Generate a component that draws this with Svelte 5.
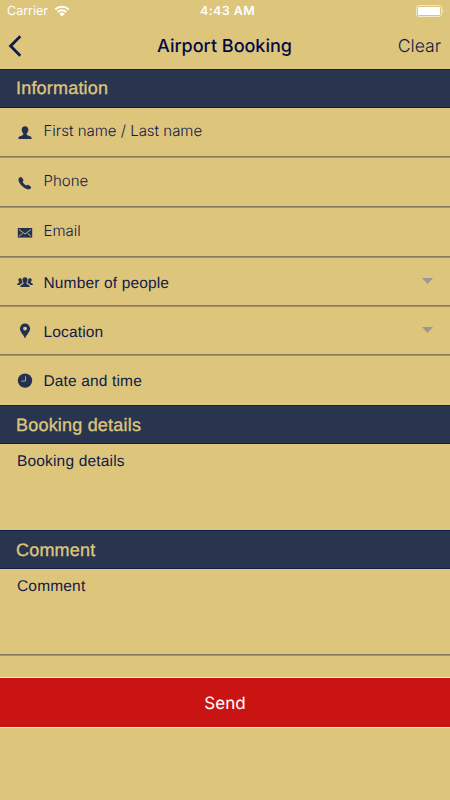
<script lang="ts">
    const fields = [
        { icon: 'person', label: 'First name / Last name', kind: 'text' },
        { icon: 'phone', label: 'Phone', kind: 'text' },
        { icon: 'mail', label: 'Email', kind: 'text' },
        { icon: 'people', label: 'Number of people', kind: 'select' },
        { icon: 'pin', label: 'Location', kind: 'select' },
        { icon: 'clock', label: 'Date and time', kind: 'date' },
    ];
</script>

{#snippet icon(name)}
    <svg class="icon" viewBox="0 0 16 16">
        {#if name === 'person'}
            <path d="M8 1.200c2.100 0 3.300 1.300 3.300 3.300 0 1.700-.6 3.200-1.500 4.100-.2 1 .1 1.600 1.200 2 2.100.7 3.700 1 3.800 3.400H1.200c.1-2.400 1.700-2.700 3.800-3.400 1.100-.4 1.400-1 1.200-2-.9-.9-1.500-2.400-1.500-4.100 0-2 1.200-3.300 3.300-3.300z" />
        {:else if name === 'phone'}
            <path d="M2.200 2.800c1-1.100 2-1.200 2.700-.3l1.400 2.200c.4.8.1 1.300-.7 2.100.8 1.700 2 3 3.700 3.800.8-.8 1.300-1.100 2.100-.6l2.200 1.400c.8.7.7 1.700-.3 2.400-1.300 1-3.100.8-5.400-.5-2.400-1.400-4.300-3.300-5.600-5.700-1.100-2-1.100-3.800-.1-4.800z" />
        {:else if name === 'mail'}
            <path d="M.8 3h14.400v9.600H.8z" />
            <path class="cut" d="M2 4.500l6 4.500 6-4.500M2 11.200l3.500-2.900M14 11.200l-3.500-2.900" />
        {:else if name === 'people'}
            <path d="M8 3.200c1.600 0 2.500 1 2.500 2.500 0 1.300-.4 2.300-1.100 3-.2.800.1 1.200.9 1.500 1.400.5 2.400 1 2.400 2.700H3.300c0-1.700 1-2.200 2.400-2.700.8-.3 1.100-.7.9-1.500-.7-.7-1.100-1.700-1.100-3 0-1.500.9-2.500 2.500-2.500z" />
            <path d="M3 4.200c.8 0 1.400.3 1.700.9-.1 1.500.2 2.700.9 3.600l-.2.5c-1.400.4-2.200.8-2.600 1.700H.1c0-1.200.6-1.600 1.500-1.900.6-.2.8-.6.6-1.200-.5-.5-.9-1.100-.9-1.900 0-1.100.7-1.700 1.700-1.700z" />
            <path d="M13 4.200c-.8 0-1.400.3-1.700.9.1 1.500-.2 2.700-.9 3.600l.2.5c1.400.4 2.200.8 2.600 1.700h2.700c0-1.200-.6-1.600-1.500-1.900-.6-.2-.8-.6-.6-1.200.5-.5.9-1.100.9-1.900 0-1.100-.7-1.700-1.700-1.700z" />
        {:else if name === 'pin'}
            <path fill-rule="evenodd" d="M8 .5a5.100 5.100 0 0 1 5.100 5.100C13.100 9 9.700 11.500 8 15.400 6.300 11.500 2.900 9 2.900 5.600A5.100 5.100 0 0 1 8 .5zm0 3.200a1.900 1.900 0 1 0 0 3.800 1.900 1.900 0 0 0 0-3.800z" />
        {:else}
            <circle cx="8" cy="7.600" r="7.200" />
            <path class="hands" d="M8.500 3.300v4.800H4.300" />
        {/if}
    </svg>
{/snippet}

<div class="screen">
    <div class="status">
        <div class="carrier">
            Carrier
            <svg class="wifi" viewBox="0 0 16 12">
                <path d="M1.200 4.500a9.800 9.800 0 0 1 13.600 0M3.600 7a6.300 6.300 0 0 1 8.800 0" />
                <path class="dot" d="M8 11.400L5.200 8.800a4 4 0 0 1 5.600 0z" />
            </svg>
        </div>
        <div class="clock">4:43 AM</div>
        <svg class="battery" viewBox="0 0 28 12">
            <rect class="case" x=".5" y=".5" width="25" height="11" rx="2.500" />
            <rect x="2" y="2" width="22" height="8" rx="1.200" />
            <path class="tip" d="M26.500 4c1.300.6 1.300 3.400 0 4z" />
        </svg>
    </div>

    <header>
        <button class="back" aria-label="Back">
            <svg viewBox="0 0 14 22"><path d="M12.300 1.300L2.600 11l9.700 9.700" /></svg>
        </button>
        <h1>Airport Booking</h1>
        <button class="clear">Clear</button>
    </header>

    <h2>Information</h2>
    {#each fields as field}
        <div class="field {field.kind}">
            {@render icon(field.icon)}
            <span class="label">{field.label}</span>
            {#if field.kind === 'select'}
                <svg class="arrow" viewBox="0 0 11 6"><path d="M0 0h11L5.500 6z" /></svg>
            {/if}
        </div>
    {/each}

    <h2 class="lower">Booking details</h2>
    <div class="area details">Booking details</div>
    <h2 class="lower">Comment</h2>
    <div class="area comment">Comment</div>

    <button class="send">Send</button>
</div>

<style>
    :global(body) {
        margin: 0;
        background: #dec57c;
    }

    .screen {
        height: 800px;
        overflow: hidden;
        background: #dec57c;
        color: #101b49;
        font-family: Inter, sans-serif;
        text-rendering: geometricPrecision;
    }

    button {
        padding: 0;
        border: 0;
        background: none;
        color: inherit;
        font-family: inherit;
        text-rendering: inherit;
    }

    .status {
        display: grid;
        grid-template-columns: 1fr auto 1fr;
        align-items: center;
        height: 23px;
        padding: 0 6px 0 7px;
        color: #fff;
        font-size: 12.5px;
        line-height: 17px;
    }

    .carrier {
        display: flex;
        align-items: center;
        gap: 6px;
    }

    .wifi {
        width: 16px;
        height: 12px;
        margin-bottom: 1px;
        fill: none;
        stroke: #fff;
        stroke-width: 1.9;
    }

    .wifi .dot {
        fill: #fff;
        stroke: none;
    }

    .clock {
        padding-left: 4px;
        font-weight: 600;
        letter-spacing: 0.4px;
    }

    .battery {
        justify-self: end;
        width: 28px;
        height: 12px;
        margin-bottom: 1px;
        fill: #fff;
    }

    .battery .case {
        fill: none;
        stroke: #fff;
        stroke-opacity: 0.6;
    }

    .battery .tip { fill-opacity: 0.6; }

    header {
        display: grid;
        grid-template-columns: 1fr auto 1fr;
        align-items: center;
        height: 46px;
        padding: 0 9px 0 8px;
    }

    .back {
        justify-self: start;
        height: 22px;
    }

    .back svg {
        display: block;
        width: 14px;
        height: 22px;
        fill: none;
        stroke: #101b49;
        stroke-width: 2.8;
    }

    h1 {
        margin: 1px 0 0;
        font-size: 18px;
        font-weight: 500;
        color: #020b45;
    }

    .clear {
        justify-self: end;
        margin-top: 1px;
        font-size: 17.6px;
        font-weight: 300;
    }

    h2 {
        box-sizing: border-box;
        height: 39px;
        margin: 0;
        padding-left: 16px;
        border: 1px solid #0c2048;
        border-width: 1px 0;
        background: #29344f;
        color: #dec57c;
        font: 400 18px/37px "Liberation Sans", sans-serif;
        letter-spacing: 0.2px;
        -webkit-text-stroke: 0.35px #dec57c;
    }

    h2.lower { line-height: 38px; }

    .field {
        display: flex;
        align-items: center;
        box-sizing: border-box;
        height: 49px;
        padding: 0 17px;
        border-bottom: 1px solid #a5926a;
        box-shadow: inset 0 -1px #8b7a60;
        font-family: "Liberation Sans", sans-serif;
        font-size: 15.5px;
        letter-spacing: 0.15px;
    }

    .field.text {
        height: 50px;
        font-family: Inter, sans-serif;
        font-size: 15px;
        font-weight: 350;
        letter-spacing: 0;
    }

    .field.date {
        border-bottom: 0;
        box-shadow: none;
    }

    .label { margin-top: 3px; }

    .text .label { margin: 0 0 4px; }

    .icon {
        width: 16px;
        height: 16px;
        margin-right: 10.5px;
        fill: #24304f;
    }

    .text .icon { margin-top: 1px; }

    .icon .cut {
        fill: none;
        stroke: #dec57c;
        stroke-width: 0.9;
    }

    .icon .hands {
        fill: none;
        stroke: #dec57c;
        stroke-width: 0.8;
    }

    .arrow {
        width: 11px;
        height: 6px;
        margin-left: auto;
        margin-bottom: 3px;
        fill: #999896;
    }

    .area {
        box-sizing: border-box;
        padding: 9px 17px;
        font-family: "Liberation Sans", sans-serif;
        font-size: 15.5px;
        line-height: 18px;
        letter-spacing: 0.17px;
    }

    .details { height: 86px; }

    .comment {
        height: 87px;
        border-bottom: 1px solid #a5926a;
        box-shadow: inset 0 -1px #8b7a60;
    }

    .send {
        display: block;
        box-sizing: border-box;
        width: 100%;
        height: 51px;
        margin-top: 21px;
        padding-top: 2px;
        border: 1px solid #f8e5cf;
        border-width: 1px 0;
        background: #ca1414;
        color: #fff;
        font-size: 17px;
    }
</style>
